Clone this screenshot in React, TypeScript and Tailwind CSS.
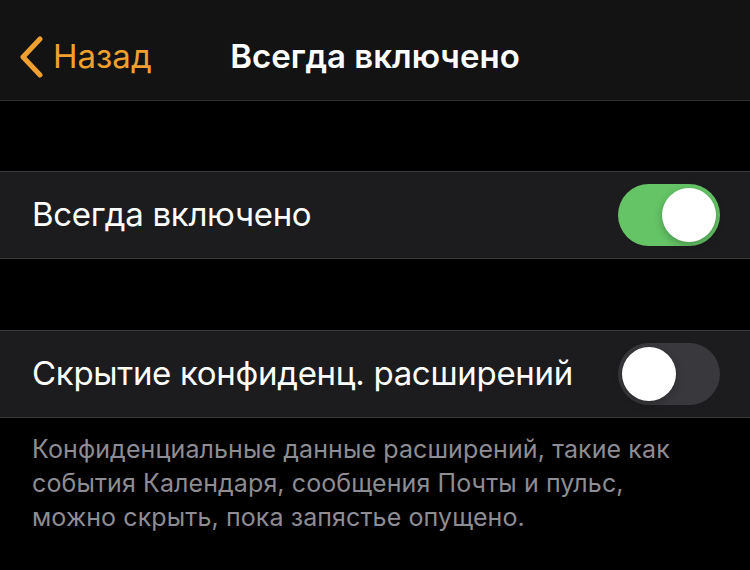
import React from 'react';

const Toggle = ({ on }: { on: boolean }) => (
  <div
    className={`relative h-[62px] w-[102px] shrink-0 rounded-full ${on ? 'bg-[#65c466]' : 'bg-[#39393d]'}`}
  >
    <div
      className={`absolute top-[4px] h-[54px] w-[54px] rounded-full bg-white shadow-[0_3px_8px_rgba(0,0,0,0.25)] ${
        on ? 'right-[4px]' : 'left-[4px]'
      }`}
    />
  </div>
);

const Row = ({ label, on }: { label: string; on: boolean }) => (
  <div className="flex h-[88px] items-center justify-between border-y border-[#3a3a3c] bg-[#1c1c1e] pl-[32px] pr-[30px]">
    <span className="text-[33px] tracking-[-0.3px] text-white">{label}</span>
    <Toggle on={on} />
  </div>
);

export default function App() {
  return (
    <div
      className="h-[570px] w-[750px] overflow-hidden bg-black"
      style={{ fontFamily: 'Inter, "Noto Sans", sans-serif' }}
    >
      <header className="relative flex h-[101px] items-center justify-center border-b border-[#2c2c2e] bg-[#131313] pt-[14px]">
        <div className="absolute left-[18px] top-[14px] bottom-0 flex items-center gap-[9px] text-[#f0a02f]">
          <svg width="26" height="42" viewBox="0 0 26 42" fill="none">
            <path
              d="M22 3 L5 21 L22 39"
              stroke="currentColor"
              strokeWidth="5"
              strokeLinecap="round"
              strokeLinejoin="round"
            />
          </svg>
          <span className="text-[33px]">Назад</span>
        </div>
        <h1 className="text-[33px] font-semibold text-white">Всегда включено</h1>
      </header>

      <div className="h-[70px]" />
      <Row label="Всегда включено" on />
      <div className="h-[71px]" />
      <Row label="Скрытие конфиденц. расширений" on={false} />

      <p className="px-[32px] pt-[14px] text-[25px] leading-[34px] tracking-[0.1px] text-[#8d8d93]">
        Конфиденциальные данные расширений, такие как
        <br />
        события Календаря, сообщения Почты и пульс,
        <br />
        можно скрыть, пока запястье опущено.
      </p>
    </div>
  );
}
